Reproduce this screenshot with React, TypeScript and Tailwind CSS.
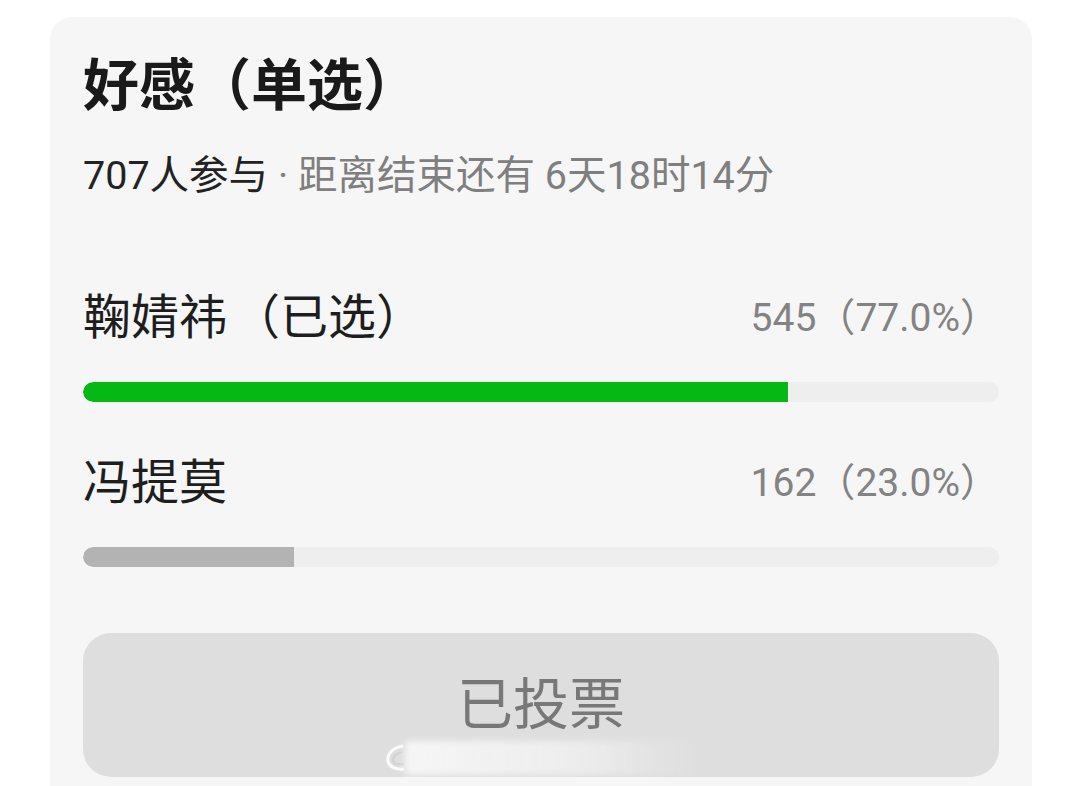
import React from 'react';

type Option = {
  name: string;
  votes: number;
  percent: number;
  picked?: boolean;
};

const options: Option[] = [
  { name: '鞠婧祎', votes: 545, percent: 77.0, picked: true },
  { name: '冯提莫', votes: 162, percent: 23.0 },
];

const fontStack = "font-['Roboto','Noto_Sans_CJK_SC',sans-serif]";

const OptionRow: React.FC<{ option: Option; first: boolean }> = ({ option, first }) => (
  <div className={first ? 'mt-[92px]' : 'mt-[53px]'}>
    <div className="flex h-[56px] items-center justify-between">
      <span className="text-[48px] leading-[56px] text-[#1e1e1e]">
        {option.name}
        {option.picked && <span className="ml-[5px]">（已选）</span>}
      </span>
      <span className="text-[39px] leading-[56px] text-[#838383]">
        {option.votes}（{option.percent.toFixed(1)}%）
      </span>
    </div>
    <div className="mt-[36px] h-[20px] w-full overflow-hidden rounded-full bg-[#eeeeee]">
      <div
        className={`h-full rounded-l-full ${option.picked ? 'bg-[#05b814]' : 'bg-[#b3b3b3]'}`}
        style={{ width: `${option.percent}%` }}
      />
    </div>
  </div>
);

// little weibo-style watermark over the button
const Watermark: React.FC = () => (
  <div className="pointer-events-none absolute bottom-[2px] left-[302px] flex items-center opacity-90">
    <svg width="20" height="32" viewBox="0 0 20 32" fill="none">
      <path d="M18 4 C6 6 2 13 3 19 C4 25 11 28 19 27" stroke="#ffffff" strokeWidth="3" />
      <path d="M18 10 C11 11 8 14 8 18 C8 22 12 23 19 22" stroke="#d0d0d0" strokeWidth="2" />
    </svg>
    <div className="h-[34px] w-[290px] rounded-[4px] bg-[linear-gradient(90deg,rgba(255,255,255,0.8),rgba(255,255,255,0.5)_60%,rgba(255,255,255,0))] blur-[3px]" />
  </div>
);

const App: React.FC = () => {
  return (
    <div className={`h-[786px] w-[1080px] overflow-hidden bg-white pl-[50px] pr-[48px] pt-[17px] ${fontStack}`}>
      <div className="h-[790px] rounded-[22px] bg-[#f6f6f6] px-[33px] pt-[37px]">
        <h1 className="text-[56px] font-bold leading-[64px] text-[#1a1a1a]">好感（单选）</h1>
        <p className="mt-[36px] text-[39.5px] leading-[44px]">
          <span className="text-[#222222]">707人参与</span>
          <span className="text-[#7f7f7f]"> · 距离结束还有 6天18时14分</span>
        </p>

        {options.map((o, i) => (
          <OptionRow key={o.name} option={o} first={i === 0} />
        ))}

        <div className="relative mt-[66px] flex h-[144px] items-center justify-center rounded-[28px] bg-[#dedede]">
          <span className="text-[56px] leading-none text-[#787878]">已投票</span>
          <Watermark />
        </div>
      </div>
    </div>
  );
};

export default App;
